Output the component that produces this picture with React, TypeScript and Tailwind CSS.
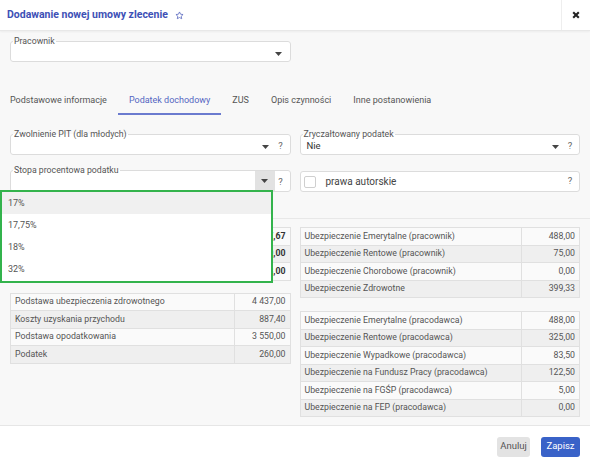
import React from 'react';

function Caret() {
  return (
    <svg width="7" height="4" viewBox="0 0 7 4" className="shrink-0">
      <path d="M0 0 L7 0 L3.5 4 Z" fill="#444" />
    </svg>
  );
}

function Field({
  label,
  value,
  grayCaret,
  noHelp,
}: {
  label: string;
  value?: string;
  grayCaret?: boolean;
  noHelp?: boolean;
}) {
  return (
    <fieldset className="border border-[#dcdcdc] rounded-[3px] bg-white pl-[2px] pr-[3px] min-w-0">
      <legend className="text-[8.75px] leading-[10px] text-[#555] px-[1px]">{label}</legend>
      <div className="h-[15px] flex items-center">
        <span className="flex-1 text-[9.5px] text-[#333] pl-[4px] -mt-[1px]">{value}</span>
        {grayCaret ? (
          <div className="w-[20px] h-[20px] -mt-[5px] -mb-[1px] bg-[#e2e2e2] flex items-center justify-center">
            <Caret />
          </div>
        ) : (
          <div className="w-[18px] flex justify-center">
            <Caret />
          </div>
        )}
        {!noHelp && <span className="w-[12px] text-center text-[9.5px] text-[#666] -mt-[1px]">?</span>}
      </div>
    </fieldset>
  );
}

type Row = [string, string];

function DataTable({ rows, valueWidth, bold }: { rows: Row[]; valueWidth: string; bold?: boolean }) {
  return (
    <div className="border border-[#e0e0e0] border-b-0 text-[8.75px] text-[#555]">
      {rows.map(([label, value], i) => (
        <div
          key={label}
          className={`flex h-[17.5px] border-b border-[#e0e0e0] ${i % 2 === 0 ? 'bg-[#fafafa]' : 'bg-[#efefef]'}`}
        >
          <div className="flex-1 flex items-center px-[4px] border-r border-[#e0e0e0] whitespace-nowrap overflow-hidden">
            {label}
          </div>
          <div
            className={`${valueWidth} flex items-center justify-end px-[4px] whitespace-nowrap ${
              bold ? 'font-bold text-[#333]' : ''
            }`}
          >
            {value}
          </div>
        </div>
      ))}
    </div>
  );
}

const summary: Row[] = [
  ['Wynagrodzenie brutto', '5 007,67'],
  ['Do wypłaty', '3 930,00'],
  ['Koszt pracodawcy', '5 358,00'],
];

const tax: Row[] = [
  ['Podstawa ubezpieczenia zdrowotnego', '4 437,00'],
  ['Koszty uzyskania przychodu', '887,40'],
  ['Podstawa opodatkowania', '3 550,00'],
  ['Podatek', '260,00'],
];

const employee: Row[] = [
  ['Ubezpieczenie Emerytalne (pracownik)', '488,00'],
  ['Ubezpieczenie Rentowe (pracownik)', '75,00'],
  ['Ubezpieczenie Chorobowe (pracownik)', '0,00'],
  ['Ubezpieczenie Zdrowotne', '399,33'],
];

const employer: Row[] = [
  ['Ubezpieczenie Emerytalne (pracodawca)', '488,00'],
  ['Ubezpieczenie Rentowe (pracodawca)', '325,00'],
  ['Ubezpieczenie Wypadkowe (pracodawca)', '83,50'],
  ['Ubezpieczenie na Fundusz Pracy (pracodawca)', '122,50'],
  ['Ubezpieczenie na FGŚP (pracodawca)', '5,00'],
  ['Ubezpieczenie na FEP (pracodawca)', '0,00'],
];

const tabs = ['Podstawowe informacje', 'Podatek dochodowy', 'ZUS', 'Opis czynności', 'Inne postanowienia'];

export default function App() {
  return (
    <div className="relative w-[590px] h-[467px] overflow-hidden bg-[#f8f8f8] flex flex-col font-[Roboto,sans-serif] text-[#555]">
      <header className="h-[31px] shrink-0 bg-white border-b border-[#e8e8e8] shadow-[0_1px_2px_rgba(0,0,0,0.05)] flex items-center">
        <h1 className="pl-[7px] text-[10.5px] font-bold text-[#3d50b6]">Dodawanie nowej umowy zlecenie</h1>
        <svg width="9" height="9" viewBox="0 0 24 24" className="ml-[7px]" fill="none" stroke="#5c6bc0" strokeWidth="2.2" strokeLinejoin="round">
          <path d="M12 2.5l2.9 6.1 6.6.8-4.9 4.6 1.3 6.6L12 17.3l-5.9 3.3 1.3-6.6-4.9-4.6 6.6-.8z" />
        </svg>
        <div className="flex-1" />
        <div className="w-[29px] h-full border-l border-[#eeeeee] flex items-center justify-center">
          <svg width="8" height="8" viewBox="0 0 10 10">
            <path d="M1.5 1.5 L8.5 8.5 M8.5 1.5 L1.5 8.5" stroke="#222" strokeWidth="2.6" />
          </svg>
        </div>
      </header>

      <main className="flex-1 flex flex-col">
        <div className="px-[10px] pt-[5px]">
          <div className="w-[281px]">
            <Field label="Pracownik" noHelp />
          </div>
        </div>

        <nav className="flex mt-[26px] -ml-[1px] text-[9px]">
          {tabs.map((t) => (
            <div
              key={t}
              className={`h-[27px] px-[11px] flex items-center border-b-2 ${
                t === 'Podatek dochodowy' ? 'border-[#6b7bcf] text-[#5566c2]' : 'border-transparent text-[#555]'
              }`}
            >
              {t}
            </div>
          ))}
        </nav>

        <div className="grid grid-cols-2 gap-x-[9px] gap-y-[10px] px-[10px] mt-[14px]">
          <Field label="Zwolnienie PIT (dla młodych)" />
          <Field label="Zryczałtowany podatek" value="Nie" />
          <Field label="Stopa procentowa podatku" grayCaret />
          <div className="mt-[6px] h-[21px] border border-[#dcdcdc] rounded-[3px] bg-white flex items-center pl-[3px] pr-[3px]">
            <div className="w-[12px] h-[12px] border border-[#cfcfcf] rounded-[2px] bg-white" />
            <span className="flex-1 pl-[10px] text-[10px] text-[#444]">prawa autorskie</span>
            <span className="w-[12px] text-center text-[9.5px] text-[#666]">?</span>
          </div>
        </div>

        <div className="mt-[26px] border-t border-[#e8e8e8]" />

        <div className="grid grid-cols-2 gap-x-[9px] px-[10px] pt-[8px]">
          <div className="flex flex-col gap-[12px]">
            <DataTable rows={summary} valueWidth="w-[55px]" bold />
            <DataTable rows={tax} valueWidth="w-[55px]" />
          </div>
          <div className="flex flex-col gap-[13px]">
            <DataTable rows={employee} valueWidth="w-[57px]" />
            <DataTable rows={employer} valueWidth="w-[57px]" />
          </div>
        </div>
      </main>

      <footer className="h-[42px] shrink-0 bg-white border-t border-[#e6e6e6] flex items-center justify-end gap-[11px] pr-[10px] text-[9.5px]">
        <button type="button" className="h-[20px] w-[33px] rounded-[3px] bg-[#e3e3e3] text-[#555]">
          Anuluj
        </button>
        <button type="button" className="h-[20px] w-[39px] rounded-[3px] bg-[#3962c8] text-white">
          Zapisz
        </button>
      </footer>

      <ul className="absolute left-0 top-[190px] w-[273px] h-[93px] border-2 border-[#33b34c] bg-white text-[9px] text-[#555]">
        {['17%', '17,75%', '18%', '32%'].map((o, i) => (
          <li key={o} className={`h-[22px] flex items-center px-[6px] pt-px ${i === 0 ? 'bg-[#f0f0f0]' : ''}`}>
            {o}
          </li>
        ))}
      </ul>
    </div>
  );
}
